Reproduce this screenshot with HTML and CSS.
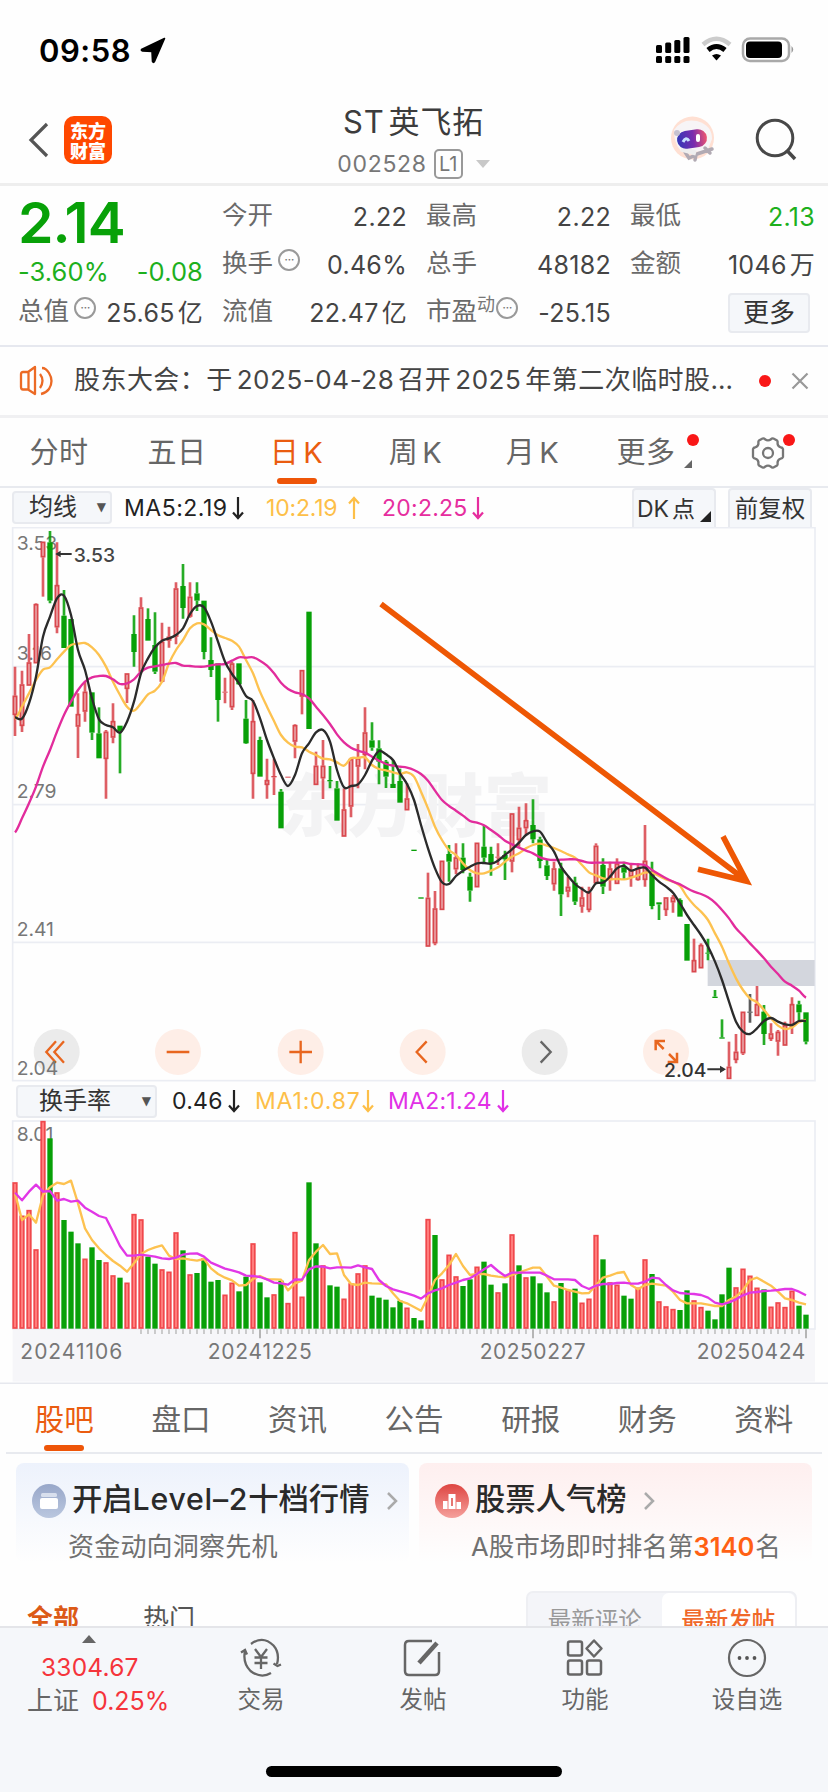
FILE: index.html
```html
<!DOCTYPE html>
<html lang="zh-CN">
<head>
<meta charset="utf-8">
<title>ST英飞拓 002528</title>
<link rel="stylesheet" href="styles.css">
</head>
<body>
<main class="app">
  <div class="status">
    <span class="clock">09:58</span>
    <svg class="loc" width="26" height="27" viewBox="0 0 26 27"><path d="M24.500 1.500L1.500 12.500Q1 13.500 2.500 14L12 14.500L12.500 24.500Q13.500 26.500 14.500 24.500Z" fill="#000" stroke="#000" stroke-width="1.600" stroke-linejoin="round"/></svg>
    <svg class="sys" width="140" height="30" viewBox="0 0 140 30">
      <g><rect x="1" y="10" width="6" height="8" rx="1.500"/><rect x="10.200" y="7.500" width="6" height="10.500" rx="1.500"/><rect x="19.300" y="5" width="6" height="13" rx="1.500"/><rect x="28.500" y="2" width="6" height="16" rx="1.500"/>
      <rect x="1" y="21" width="6" height="7" rx="1.500"/><rect x="10.200" y="21" width="6" height="7" rx="1.500"/><rect x="19.300" y="21" width="6" height="7" rx="1.500"/><rect x="28.500" y="21" width="6" height="7" rx="1.500"/></g>
      <path d="M48 9.500Q61.500 -2 75 9.500" fill="none" stroke="#ccc" stroke-width="4.500"/>
      <path d="M53 15Q61.500 8 70 15" fill="none" stroke="#000" stroke-width="5"/>
      <path d="M57 20.500Q61.500 17.500 66 20.500L61.500 25.500Z"/>
      <rect x="88" y="3.500" width="46" height="22.500" rx="7" fill="#fff" stroke="#a9a9a9" stroke-width="2.500"/><rect x="91" y="6.500" width="36" height="16.500" rx="4"/><path d="M136.500 11Q140 14.500 136.500 18Z" fill="#999"/>
    </svg>
  </div>
  <header class="head">
    <svg width="22" height="36" viewBox="0 0 22 36"><path d="M19 2L3 18L19 34" fill="none" stroke="#555" stroke-width="3.200"/></svg>
    <div class="logo"><span>东方</span><span>财富</span></div>
    <div class="name">
      <h1><span>ST</span>英飞拓</h1>
      <div class="code"><span>002528</span><b>L1</b><i></i></div>
    </div>
    <svg class="robot" width="48" height="48" viewBox="0 0 48 48">
      <circle cx="23.500" cy="22" r="21.500" fill="#ffe0d3"/><path d="M5 14Q13 2 28 5Q43 9 43 23L38 36L12 35Q5 28 5 14Z" fill="#f7f4f6"/>
      <path d="M16 36L20 42L27 39L26 44M28 38L43 33M36 32L41 37" stroke="#b1aab3" stroke-width="3.500" stroke-linecap="round" fill="none"/><path d="M12 33L27 37" stroke="#eee" stroke-width="5"/>
      <rect x="8" y="14" width="30" height="18" rx="9" transform="rotate(-8 23 23)" fill="url(#visor)"/><path d="M14 26Q17 20 20 25" stroke="#c7e0ff" stroke-width="3" fill="none"/><rect x="27" y="18" width="4" height="8" rx="2" fill="#fff"/>
      <circle cx="8" cy="17" r="3" fill="#c7c2d0"/>
      <defs><linearGradient id="visor"><stop offset="0" stop-color="#3338b8"/><stop offset=".55" stop-color="#7a2cae"/><stop offset="1" stop-color="#ef5570"/></linearGradient></defs>
    </svg>
    <svg width="44" height="44" viewBox="0 0 44 44"><circle cx="20" cy="20" r="17.800" fill="none" stroke="#484848" stroke-width="3"/><path d="M31.500 32L40 41" stroke="#484848" stroke-width="3.500"/></svg>
  </header>

  <section class="quote">
    <div class="last"><strong>2.14</strong><div class="chg"><span>-3.60%</span><span>-0.08</span></div></div>
    <div class="cell"><label>今开</label><span>2.22</span></div>
    <div class="cell"><label>最高</label><span>2.22</span></div>
    <div class="cell"><label>最低</label><span class="green">2.13</span></div>
    <div class="cell"><label>换手</label><i class="info">···</i><span>0.46%</span></div>
    <div class="cell"><label>总手</label><span>48182</span></div>
    <div class="cell"><label>金额</label><span>1046<em>万</em></span></div>
    <div class="cell"><label>总值</label><i class="info">···</i><span>25.65<em>亿</em></span></div>
    <div class="cell"><label>流值</label><span>22.47<em>亿</em></span></div>
    <div class="cell"><label>市盈</label><sup>动</sup><i class="info pe">···</i><span>-25.15</span></div>
    <div class="cell end"><button class="more">更多</button></div>
  </section>

  <section class="notice">
    <svg width="36" height="32" viewBox="0 0 36 32" fill="none" stroke="#ec6a25" stroke-width="2.300"><path d="M16 2L9 7H4Q2 7 2 9V22Q2 24.500 4 24.500H9L16 29Z M9.500 7V24M21 9Q26 15.500 21 23M23 3Q27 3 30 8Q35 16 30 24Q27 28 22 29" stroke-linejoin="round"/></svg>
    <p>股东大会：于<span>2025-04-28</span>召开<span>2025</span>年第二次临时股…</p>
    <i class="dot"></i>
    <svg width="18" height="18" viewBox="0 0 18 18"><path d="M1.500 1.500L16.500 16.500M16.500 1.500L1.500 16.500" stroke="#999" stroke-width="2.200"/></svg>
  </section>

  <nav class="periods">
    <a>分时</a><a>五日</a><a class="on">日<em>K</em></a><a>周<em>K</em></a><a>月<em>K</em></a><a class="drop">更多<i class="dot"></i></a>
    <a class="gear"><svg width="36" height="34" viewBox="0 0 36 34" fill="none" stroke="#777" stroke-width="2.300"><path d="M12.500 2.500Q14 2 15 3.300Q18 5.500 21 3.300Q22 2 23.500 2.500L27 4.500Q28 5.500 27.500 7Q27.500 10.500 31 11.500Q32.500 11.500 33 13V21Q32.500 22.500 31 22.500Q27.500 23.500 27.500 27Q28 28.500 27 29.500L23.500 31.500Q22 32 21 30.700Q18 28.500 15 30.700Q14 32 12.500 31.500L9 29.500Q8 28.500 8.500 27Q8.500 23.500 5 22.500Q3.500 22.500 3 21V13Q3.500 11.500 5 11.500Q8.500 10.500 8.500 7Q8 5.500 9 4.500Z"/><circle cx="18" cy="17" r="5"/></svg><i class="dot"></i></a>
  </nav>

  <div class="bar main-bar">
    <button class="pick">均线<i>▼</i></button>
    <span class="ma m5">MA5:2.19<svg class="ar" viewBox="0 0 14 24"><path d="M7 1V22M2 16.500L7 22L12 16.500"/></svg></span>
    <span class="ma m10">10:2.19<svg class="ar" viewBox="0 0 14 24"><path d="M7 23V2M2 7.500L7 2L12 7.500"/></svg></span>
    <span class="ma m20">20:2.25<svg class="ar" viewBox="0 0 14 24"><path d="M7 1V22M2 16.500L7 22L12 16.500"/></svg></span>
    <span class="tools"><button class="dk">DK<em>点</em></button><button>前复权</button></span>
  </div>
  <svg id="kline" class="chart" width="828" height="555" viewBox="0 21 2484 1665"></svg>
  <div class="bar vol-bar">
    <button class="pick wide">换手率<i>▼</i></button>
    <span class="ma v0">0.46<svg class="ar" viewBox="0 0 14 24"><path d="M7 1V22M2 16.500L7 22L12 16.500"/></svg></span>
    <span class="ma v1">MA1:0.87<svg class="ar" viewBox="0 0 14 24"><path d="M7 1V22M2 16.500L7 22L12 16.500"/></svg></span>
    <span class="ma v2">MA2:1.24<svg class="ar" viewBox="0 0 14 24"><path d="M7 1V22M2 16.500L7 22L12 16.500"/></svg></span>
  </div>
  <svg id="turnover" class="chart" width="828" height="264" viewBox="0 30 2484 792"></svg>

  <nav class="sections"><a class="on">股吧</a><a>盘口</a><a>资讯</a><a>公告</a><a>研报</a><a>财务</a><a>资料</a></nav>

  <section class="cards">
    <article class="card blue">
      <h2><svg width="34" height="34" viewBox="0 0 34 34"><defs><linearGradient id="gb" x2="0" y2="1"><stop stop-color="#98a7c9"/><stop offset="1" stop-color="#bac7df"/></linearGradient></defs><circle cx="17" cy="17" r="17" fill="url(#gb)"/><rect x="9" y="9" width="16" height="4" rx="1.500" fill="#d8dfed"/><rect x="8" y="14" width="18" height="11" rx="2" fill="#fff"/></svg><span>开启<em>Level–2</em>十档行情</span><svg class="go" width="12" height="18" viewBox="0 0 12 18"><path d="M2 1L10 9L2 17"/></svg></h2>
      <p>资金动向洞察先机</p>
    </article>
    <article class="card pink">
      <h2><svg width="34" height="34" viewBox="0 0 34 34"><defs><linearGradient id="gr" x2="0" y2="1"><stop stop-color="#de4541"/><stop offset="1" stop-color="#f5a09c"/></linearGradient></defs><circle cx="17" cy="17" r="17" fill="url(#gr)"/><path d="M8 17H12.500V25H8ZM13.500 10H20.500V25H13.500ZM21.500 18H26V25H21.500Z" fill="#fff"/><path d="M17 14V22" stroke="#e67671" stroke-width="2"/></svg><span>股票人气榜</span><svg class="go" width="12" height="18" viewBox="0 0 12 18"><path d="M2 1L10 9L2 17"/></svg></h2>
      <p>A股市场即时排名第<b>3140</b>名</p>
    </article>
  </section>

  <section class="feed"><a class="on">全部</a><a>热门</a><div class="seg"><span>最新评论</span><span class="sel">最新发帖</span></div></section>

  <footer class="dock">
    <div class="index"><i></i><div class="pts">3304.67</div><div class="pct"><span>上证</span><b>0.25%</b></div></div>
    <a><svg width="44" height="40" viewBox="0 0 44 40" fill="none" stroke="#666" stroke-width="2.300"><path d="M12 6Q24 -3 34.500 7.500Q41 15 38 26M32 35Q22 41 11.500 33Q3.500 25 6 13M2 14.500L6 12L8 16.500M34.500 25.500L38.500 28L42 26.500M16 11L22 19L28 11M22 19V31M15.500 19.500H28.500M15.500 25H28.500"/></svg>交易</a>
    <a><svg width="44" height="40" viewBox="0 0 44 40" fill="none" stroke="#666" stroke-width="2.500"><path d="M31 3H8Q4 3 4 7V33Q4 37 8 37H34Q38 37 38 33V14"/><path d="M18 25L36 5" stroke-width="4.500"/></svg>发帖</a>
    <a><svg width="44" height="40" viewBox="0 0 44 40" fill="none" stroke="#666" stroke-width="2.500"><rect x="5" y="3.500" width="14" height="14" rx="2"/><rect x="5" y="22.500" width="14" height="14" rx="2"/><rect x="24" y="22.500" width="14" height="14" rx="2"/><path d="M31 2.500L38.500 10.500L31 18.500L23.500 10.500Z" stroke-linejoin="round"/></svg>功能</a>
    <a><svg width="44" height="40" viewBox="0 0 44 40"><circle cx="22" cy="20" r="18" fill="none" stroke="#666" stroke-width="2.200"/><g fill="#555"><circle cx="14.500" cy="20" r="1.900"/><circle cx="22" cy="20" r="1.900"/><circle cx="29.500" cy="20" r="1.900"/></g></svg>设自选</a>
    <div class="home"></div>
  </footer>
</main>
<script src="chart.js"></script>
</body>
</html>
```
FILE: styles.css
```css
* { box-sizing: border-box; }
body { margin: 0; background: #fefefe; color: #444; font-family: Inter, "Noto Sans CJK SC", sans-serif; }
h1, h2, p { margin: 0; font-weight: 400; }
i, em { font-style: normal; }
button { font: inherit; color: #333; margin: 0; padding: 0; background: #f5f7fa; border: 2px solid #e8eaef; border-radius: 4px; }
svg { flex: none; }
.app { width: 828px; height: 1792px; overflow: hidden; display: flex; flex-direction: column; }
.app > * { flex: none; }
.green { color: #1db01d; }
.dot { display: block; width: 12px; height: 12px; border-radius: 50%; background: #f91717; }

.status { height: 98px; display: flex; align-items: center; padding: 2px 33px 0 39px; }
.clock { font-size: 31px; font-weight: 600; color: #000; width: 101px; letter-spacing: .5px; }
.sys { margin-left: auto; }

.head { height: 88px; border-bottom: 3px solid #eee; display: flex; align-items: center; padding: 0 29px 2px 28px; }
.logo { width: 48px; height: 48px; margin-left: 14px; border-radius: 10px; background: #ff4800; color: #fff; font-family: "Noto Sans CJK SC", sans-serif; font-size: 18px; font-weight: 900; line-height: 20px; display: flex; flex-direction: column; align-items: center; justify-content: center; }
.name { flex: 1; margin-left: 60px; margin-right: 14px; height: 84px; display: flex; flex-direction: column; align-items: center; }
.name h1 { font-size: 31px; line-height: 40px; margin-top: 4px; letter-spacing: .8px; color: #3c3c3c; }
.name h1 span { margin-right: 4px; }
.code { display: flex; align-items: center; height: 30px; margin-top: 7px; font-size: 23px; color: #777; }
.code span { letter-spacing: .7px; }
.code b { font-weight: 400; font-size: 20px; width: 29px; height: 30px; line-height: 27px; text-align: center; border: 2px solid #999; border-radius: 5px; margin-left: 7px; }
.code i { border: 7px solid transparent; border-top: 8px solid #c8c8c8; border-bottom: 0; margin-left: 13px; }
.robot { margin-right: 38px; }

.quote { height: 161px; border-bottom: 2px solid #e6e8ef; padding: 7px 13px 0 18px; display: grid; grid-template-columns: 185px 185px 185px 185px; grid-template-rows: repeat(3, 48px); column-gap: 19px; }
.last { grid-row: span 2; display: flex; flex-direction: column; color: #1db01d; }
.last strong { font-size: 57px; line-height: 60px; font-weight: 600; color: #08a108; letter-spacing: -1px; }
.chg { display: flex; justify-content: space-between; font-size: 25.500px; line-height: 38px; letter-spacing: .1px; }
.cell { display: flex; align-items: center; font-size: 25px; white-space: nowrap; min-width: 0; }
.cell label { color: #6a6a6a; font-size: 25.500px; line-height: 40px; padding-bottom: 4px; }
.cell span { margin-left: auto; letter-spacing: .3px; line-height: 40px; }
.cell em { margin-left: 3px; }
.cell sup { font-size: 18px; line-height: 20px; color: #777; align-self: flex-start; margin-top: 6px; }
.info { width: 22px; height: 22px; margin: -10px 0 0 5px; border: 2px solid #999; border-radius: 50%; font-size: 13px; line-height: 16px; text-align: center; color: #777; letter-spacing: -.5px; }
.pe { margin-left: 1px; }
.end { justify-content: flex-end; }
.more { width: 82px; height: 40px; margin-right: 5px; font-size: 26px; line-height: 34px; }

.notice { height: 71px; border-bottom: 3px solid #f0f0f2; display: flex; align-items: center; padding: 0 18px 0 19px; }
.notice p { width: 667px; margin-left: 19px; font-size: 26px; line-height: 36px; padding-bottom: 3px; white-space: nowrap; letter-spacing: .45px; }
.notice p span { margin: 0 4px; letter-spacing: .55px; }
.notice .dot { margin-left: 18px; margin-right: 20px; }

.periods { height: 70px; border-bottom: 2px solid #e8eaef; display: grid; grid-template-columns: 118px 118px 121px 117px 117px 116px 121px; }
.periods a { position: relative; text-align: center; font-size: 29px; line-height: 70px; color: #666; letter-spacing: .5px; }
.periods em { margin-left: 4px; }
.periods .on, .sections .on { color: #ea5c10; }
.periods .on::after, .sections .on::after { content: ""; position: absolute; left: 50%; margin-left: -20px; bottom: 4px; width: 40px; height: 6px; border-radius: 3px; background: #ee5508; }
.periods .drop { padding-right: 6px; }
.periods .drop::after { content: ""; position: absolute; right: 15px; bottom: 20px; border-left: 8px solid transparent; border-bottom: 8px solid #666; }
.periods .drop .dot { position: absolute; right: 8px; top: 16px; }
.periods .gear { display: flex; align-items: center; justify-content: center; padding-right: 0; }
.gear .dot { position: absolute; right: 33px; top: 16px; }

.bar { display: flex; align-items: center; font-size: 23px; white-space: nowrap; }
.main-bar { height: 39px; padding: 0 16px 0 12px; }
.vol-bar { height: 38px; padding-left: 16px; }
.pick { width: 100px; height: 33px; line-height: 28px; display: flex; justify-content: space-between; padding: 0 4px 0 15px; font-size: 24px; }
.pick i { font: 12px/29px "DejaVu Sans", sans-serif; color: #555; }
.pick.wide { width: 141px; padding-left: 21px; }
.ma { display: flex; align-items: center; justify-content: space-between; color: #222; letter-spacing: .25px; }
.ar { width: 14px; height: 24px; fill: none; stroke: currentColor; stroke-width: 2.200; }
.m5 { width: 121px; margin-left: 12px; letter-spacing: .5px; }
.m10 { width: 95px; margin-left: 21px; color: #fdbf48; letter-spacing: -.2px; }
.m20 { width: 103px; margin-left: 21px; color: #e62d9e; }
.tools { margin-left: auto; display: flex; gap: 12px; height: 39px; }
.tools button { width: 84px; font-size: 23.500px; line-height: 34px; border-bottom: 0; border-radius: 4px 4px 0 0; position: relative; }
.tools .dk { text-align: left; padding-left: 3px; font-size: 23px; }
.dk em { margin-left: 3px; }
.dk::after { content: ""; position: absolute; right: 3px; bottom: 5px; border-left: 11px solid transparent; border-bottom: 11px solid #222; }
.v0 { width: 69px; margin-left: 15px; }
.v1 { width: 120px; margin-left: 14px; color: #fdbf48; letter-spacing: .8px; }
.v2 { width: 122px; margin-left: 13px; color: #e130e6; }
.chart { display: block; }
.chart text { font-family: Inter, sans-serif; }
.chart .mark { font-family: "Noto Sans CJK SC", sans-serif; font-weight: 900; fill: #f3f3f4; }

.sections { height: 70px; margin: 0 6px; border-bottom: 2px solid #e8eaef; display: grid; grid-template-columns: repeat(7, 116.600px); }
.sections a { position: relative; text-align: center; font-size: 29.500px; line-height: 71px; color: #666; }
.sections .on::after { bottom: 4px; }

.cards { display: flex; gap: 10px; padding: 9px 16px 0; height: 127px; }
.card { width: 393px; height: 100px; border-radius: 8px; padding: 17px 0 0 16px; white-space: nowrap; }
.blue { background: linear-gradient(#edf2fc, #fefefe); }
.pink { background: linear-gradient(#feefef, #fefefe); }
.card h2 { display: flex; align-items: center; height: 42px; font-size: 30.300px; font-weight: 500; color: #2a2a2a; }
.card h2 span { margin-left: 6px; line-height: 42px; padding-bottom: 4px; }
.card h2 em { letter-spacing: .75px; }
.go { margin-left: 17px; fill: none; stroke: #aaa; stroke-width: 2.500; }
.card p { font-size: 26px; line-height: 42px; margin-top: 4px; margin-left: 37px; color: #707070; }
.blue p { margin-left: 36px; letter-spacing: .2px; }
.pink p { margin-left: 36px; font-size: 25.600px; }
.card p b { font-weight: 600; font-size: 25.500px; color: #ff6013; margin-right: 1px; }

.feed { height: 45px; display: flex; padding: 10px 31px 0 27px; overflow: hidden; font-size: 26px; color: #555; line-height: 56px; }
.feed a { width: 116px; flex: none; }
.feed .on { color: #dc5a16; font-weight: 700; }
.seg { margin-left: auto; width: 271px; height: 60px; flex: none; display: flex; background: #f4f5f9; border: 2px solid #eeeff3; border-radius: 7px; font-size: 23.500px; line-height: 56px; color: #999; }
.seg span { flex: 1; text-align: center; }
.seg .sel { background: #fff; color: #f0682a; font-weight: 500; border-radius: 7px; }

.dock { height: 166px; background: #f5f7fa; border-top: 2px solid #e4e5e9; position: relative; display: grid; grid-template-columns: 180px 162px 162px 162px 162px; font-size: 23.500px; color: #666; }
.dock a { display: flex; flex-direction: column; align-items: center; padding-top: 10px; line-height: 34px; gap: 5px; height: 100px; }
.index { padding: 7px 0 0 27px; color: #f5343b; }
.index i { display: block; width: 0; margin-left: 55px; border: 7px solid transparent; border-bottom: 8px solid #666; border-top: 0; }
.pts { font-size: 24.500px; line-height: 32px; padding-left: 14px; margin-top: 8px; letter-spacing: .2px; }
.pct { display: flex; gap: 13px; align-items: center; line-height: 36px; font-size: 25px; }
.pct span { color: #666; font-size: 26px; }
.pct b { font-weight: 400; }
.home { position: absolute; left: 266px; top: 138px; width: 296px; height: 11px; border-radius: 6px; background: #000; }
```
FILE: chart.js
```js
// One unit is a third of a pixel; sessions are 21 units apart.
const X = i => 45 + 21 * i;
const RED = '#d9484e', GREEN = '#08a008';

// [colour, high, body top, body bottom, low]
const candles = `r 440 527 585 648|r 452 493 618 636|r 342 427 497 497|r 250 252 430 430|r 65 65 112 230|g 33 67 242 250|r 67 195 322 340|g 210 287 384 384|g 297 297 560 560|r 520 582 620 714|r 485 515 575 605|g 517 517 638 660|g 562 640 715 715|r 630 635 717 836|r 550 603 653 670|g 617 617 635 760|r 460 460 507 549|g 286 342 396 440|r 232 262 455 460|g 265 297 362 362|g 277 375 455 462|r 308 365 485 487|r 320 350 362 383|r 187 205 350 373|g 132 198 264 296|r 187 230 290 293|g 187 220 242 273|g 242 242 396 418|g 352 420 450 471|g 430 430 540 605|r 473 515 518 550|r 425 430 562 570|g 430 430 493 495|g 540 596 670 672|r 540 603 762 836|g 650 660 770 770|r 716 780 795 836|r 716 768 772 825|g 807 815 925 925|r 770 770 773 773|r 613 615 665 715|r 450 450 530 583|g 275 275 627 627|r 695 737 795 795|r 660 737 775 837|g 738 780 784 805|g 783 805 902 902|r 805 868 950 950|r 713 717 860 892|r 672 715 740 805|r 562 637 705 748|g 607 661 683 692|g 661 685 725 793|g 720 725 770 804|g 720 792 804 804|g 746 783 848 848|r 790 835 871 871|g 989 989 993 993|g 1132 1132 1136 1136|r 1058 1133 1280 1280|r 1113 1165 1270 1276|r 1022 1022 1170 1170|g 975 1002 1025 1085|r 970 1012 1048 1063|g 970 1013 1050 1060|g 1058 1070 1112 1145|r 968 968 1102 1102|g 917 980 1013 1030|g 980 1002 1030 1067|r 970 1010 1013 1035|g 992 1005 1018 1080|r 880 880 1025 1057|r 860 923 960 980|r 850 900 925 945|g 838 915 958 970|g 950 958 1023 1045|g 1020 1036 1068 1080|r 1025 1045 1093 1112|g 1028 1045 1123 1188|r 1070 1100 1115 1132|g 1070 1088 1145 1155|r 1100 1132 1160 1178|r 1100 1117 1170 1177|r 970 977 1090 1090|g 1015 1035 1100 1122|r 1025 1045 1080 1112|r 1015 1030 1092 1092|g 1025 1042 1058 1078|r 1030 1050 1070 1100|r 1030 1045 1080 1082|r 915 1022 1080 1100|g 1025 1055 1158 1168|g 1147 1147 1153 1200|r 1132 1132 1170 1188|r 1125 1132 1147 1178|g 1135 1140 1190 1190|g 1212 1212 1322 1322|r 1256 1320 1357 1357|r 1270 1275 1345 1345|g 1256 1298 1301 1321|g 1410 1430 1434 1434|g 1498 1552 1556 1556|r 1565 1640 1677 1677|r 1542 1595 1620 1630|r 1475 1475 1600 1605|k 1422 1475 1478 1508|r 1398 1452 1488 1488|g 1455 1475 1542 1575|r 1510 1540 1557 1563|r 1530 1535 1565 1607|r 1505 1515 1577 1577|r 1432 1452 1520 1542|g 1442 1453 1477 1505|g 1477 1477 1565 1573`.split('|').map(s => s.split(' '));

const ma5 = [592,596,550,470,350,290,235,227,285,390,450,535,598,615,622,638,605,545,460,415,382,362,355,345,325,282,258,262,305,365,425,462,490,528,543,595,660,715,765,798,765,700,670,637,630,665,750,802,798,793,765,722,693,703,720,760,792,840,915,985,1045,1087,1092,1068,1052,1040,1030,1029,1031,1022,1005,988,968,945,934,935,967,995,1040,1068,1092,1107,1117,1090,1088,1070,1045,1038,1052,1045,1043,1065,1085,1100,1118,1150,1185,1215,1245,1280,1325,1380,1445,1505,1535,1542,1525,1503,1494,1505,1513,1515,1503,1503];
const ma10 = [597,560,520,480,449,442,418,395,375,371,369,382,405,440,485,525,560,572,550,523,512,485,430,390,360,325,310,313,330,346,354,362,380,420,460,515,560,603,645,668,680,682,695,705,716,718,727,737,715,714,712,735,747,751,757,762,757,770,815,865,920,960,990,1005,1030,1050,1060,1060,1052,1042,1025,1010,1000,985,975,971,977,984,993,1003,1013,1035,1057,1066,1075,1078,1077,1078,1073,1066,1058,1058,1068,1078,1085,1098,1130,1155,1175,1200,1240,1280,1330,1375,1410,1435,1447,1470,1495,1517,1527,1522,1507,1500];
const ma20 = [937,895,850,800,740,690,635,585,545,510,485,472,468,468,478,492,490,478,455,443,439,435,431,429,437,438,440,440,436,433,432,422,412,413,412,422,437,460,488,507,517,522,535,560,585,612,643,667,683,692,698,710,722,732,737,740,743,750,762,782,812,840,858,872,887,903,908,916,930,945,962,973,983,992,1000,1012,1018,1020,1019,1018,1018,1023,1028,1028,1028,1028,1028,1028,1032,1033,1036,1050,1063,1075,1085,1093,1105,1115,1122,1132,1148,1170,1195,1225,1247,1270,1292,1315,1340,1362,1385,1397,1412,1433];

// Bar tops; a negative value is a falling session.
const vol = [217,317,300,418,33,-85,247,-330,-365,-400,446,-412,-450,457,496,-503,518,312,328,-440,-461,478,485,367,-421,493,-489,-445,-515,-510,554,518,-544,-500,400,-517,-562,553,-512,579,366,560,-217,-400,466,-526,-530,566,520,490,466,-557,-563,-569,-592,-572,593,-624,-631,327,-375,508,434,499,-528,-508,470,-455,-524,547,-520,373,-466,502,-499,-520,-547,574,-519,540,-536,578,566,375,-448,517,524,-557,-566,533,448,-492,574,589,597,-600,-541,571,591,-602,-628,-553,-473,532,476,497,533,-538,590,577,591,542,-587,-614];
const vma1 = [250,330,313,338,255,232,218,222,212,280,355,390,415,435,453,467,485,460,432,420,412,406,437,447,445,449,452,447,475,492,503,511,527,525,507,498,508,508,509,541,520,512,450,425,405,432,430,495,522,525,518,520,521,523,550,573,580,591,602,560,510,490,465,432,468,495,492,492,497,500,502,495,488,480,473,473,500,527,533,540,545,550,549,525,503,497,489,486,525,538,525,521,524,527,545,570,580,580,580,584,588,588,570,560,540,510,503,515,527,545,565,570,578,583];
const vma2 = [248,271,245,224,245,243,272,267,275,272,293,305,318,324,365,408,437,437,434,437,440,445,447,443,434,431,430,440,458,467,476,481,487,497,498,501,508,518,520,524,508,509,478,469,470,475,472,472,473,466,472,477,510,528,538,544,550,557,566,550,541,535,525,518,510,505,492,478,465,483,498,488,488,488,488,488,497,508,508,508,510,528,537,527,522,522,519,518,521,521,515,503,505,525,541,549,551,552,555,563,578,583,577,568,556,548,546,543,542,540,537,537,545,556];

const line = (ys, c, w = 7) => `<path d="M${ys.map((y, i) => X(i) + ' ' + y).join('L')}" fill="none" stroke="${c}" stroke-width="${w}" stroke-linejoin="round"/>`;
// Passes through every point with softly rounded bends.
const curve = (ys, c) => {
  let d = `M${X(0)} ${ys[0]}`;
  for (let i = 1; i < ys.length; i++) {
    const a = ys[Math.max(i - 2, 0)], b = ys[i - 1], e = ys[i], f = ys[Math.min(i + 1, ys.length - 1)];
    d += `C${X(i - 1) + 7} ${b + (e - a) / 6} ${X(i) - 7} ${e - (f - b) / 6} ${X(i)} ${e}`;
  }
  return `<path d="${d}" fill="none" stroke="${c}" stroke-width="7"/>`;
};
const label = (x, y, s, c = '#777', size = 58, w = 400) => `<text x="${x}" y="${y}" font-size="${size}" fill="${c}" font-weight="${w}">${s}</text>`;

let k = '<g stroke="#ebedf3" stroke-width="5" fill="none"><rect x="38" y="23" width="2407" height="1659"/><path d="M38 440H2445M38 854H2445M38 1267H2445"/></g>';
k += '<text class="mark" x="836" y="932" font-size="205">东方财富</text><rect x="2123" y="1320" width="321" height="78" fill="#d3d6dd"/>';
const disc = (x, c) => `<circle cx="${x}" cy="1596" r="69" fill="${c}"/>`;
const PEACH = '#feeee7', GREY = '#ebebeb';
k += disc(170, GREY) + disc(534, PEACH) + disc(902, PEACH) + disc(1268, PEACH) + disc(1634, GREY) + disc(1998, PEACH);
k += '<g fill="none" stroke="#e8661f" stroke-width="7"><path d="M168 1564L139 1596L168 1628M192 1564L163 1596L192 1628M500 1596H568M868 1596H936M902 1562V1630M1280 1564L1250 1596L1280 1628"/><path d="M1622 1564L1652 1596L1622 1628" stroke="#666"/><path d="M1967 1591V1563H1995M1969 1565L1991 1587M2003 1626H2031V1598M2029 1624L2007 1602" stroke-width="7.500"/></g>';
k += label(50, 90, '3.53') + label(50, 421, '3.16') + label(50, 835, '2.79') + label(50, 1248, '2.41') + label(50, 1666, '2.04');
candles.forEach(([c, h, t, b, l], i) => {
  const x = X(i), col = c === 'r' ? RED : c === 'g' ? GREEN : '#444';
  k += `<path d="M${x} ${h}V${t}M${x} ${b}V${l}" stroke="${col}" stroke-width="8" stroke-opacity=".88"/>`;
  const hh = Math.max(b - t, 3);
  k += c === 'r' && hh > 8
    ? `<rect x="${x - 5}" y="${+t + 2}" width="10" height="${hh - 4}" fill="#e9a0a3" stroke="${col}" stroke-width="5"/>`
    : `<rect x="${x - 8}" y="${t}" width="16" height="${hh}" fill="${col}"/>`;
});
k += curve(ma10, '#fdc250') + curve(ma20, '#e22c9c') + curve(ma5, '#2b2b2b');
k += label(221, 125, '3.53', '#444', 58, 500) + label(1992, 1671, '2.04', '#333', 58, 500);
k += '<g stroke="#333" stroke-width="6"><path d="M172 102H215M2122 1648H2172"/><path d="M166 102L182 92V112ZM2178 1648L2160 1637V1659Z" fill="#333" stroke="none"/></g>';
k += '<path d="M1143 252L2240 1083M2094 1048L2240 1084L2169 949" fill="none" stroke="#ee5704" stroke-width="17"/>';
document.getElementById('kline').innerHTML = k;

let v = '<rect x="38" y="655" width="2407" height="160" fill="#f6f6f9"/><rect x="38" y="33" width="2407" height="624" fill="#fefefe" stroke="#ebedf3" stroke-width="5"/>';
v += label(50, 94, '8.01');
vol.forEach((n, i) => {
  const x = X(i), t = Math.abs(n);
  v += n < 0 ? `<rect x="${x - 8}" y="${t}" width="16" height="${656 - t}" fill="${GREEN}"/>`
    : `<rect x="${x - 5.500}" y="${t + 2}" width="11" height="${652 - t}" fill="#ff7c7c" stroke="#f0484c" stroke-width="5"/>`;
  if (i > 17) v += `<path d="M${x} 658V${[35, 74, 113].includes(i) ? 685 : 672}" stroke="#b5b5b5" stroke-width="${[35, 74, 113].includes(i) ? 6 : 4}"/>`;
});
v += line(vma1, '#fdc250') + line(vma2, '#e137e6');
[[61, '20241106', 306], [623, '20241225', 312], [1439, '20250227', 318], [2090, '20250424', 326]].forEach(([x, s, w]) => {
  v += `<text x="${x}" y="748" font-size="63" fill="#777" textLength="${w}">${s}</text>`;
});
v += '<path d="M0 820H2484" stroke="#e6e8ee" stroke-width="5"/>';
document.getElementById('turnover').innerHTML = v;
```
